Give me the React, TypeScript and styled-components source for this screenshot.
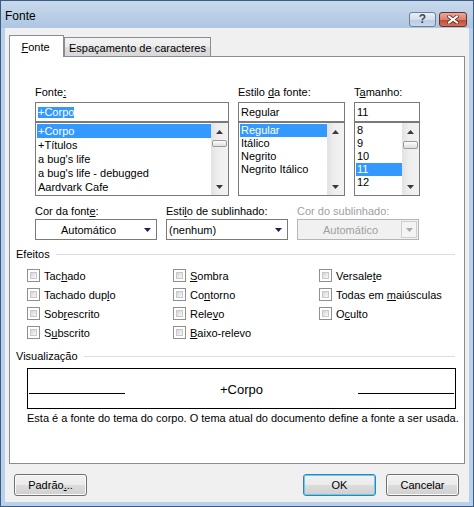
import React from "react";
import styled, { createGlobalStyle, css } from "styled-components";

const GlobalStyle = createGlobalStyle`
  html, body {
    margin: 0;
    padding: 0;
    background: #f0f0f0;
  }
  body {
    font-family: "Liberation Sans", Arial, sans-serif;
    font-size: 11px;
    color: #000;
  }
`;

const fontNames = ["+Corpo", "+Títulos", "a bug's life", "a bug's life - debugged", "Aardvark Cafe"];
const styles = ["Regular", "Itálico", "Negrito", "Negrito Itálico"];
const sizes = ["8", "9", "10", "11", "12"];

type Effect = { pre: string; key: string; post: string };
const effects: Effect[] = [
  { pre: "Tac", key: "h", post: "ado" },
  { pre: "Tachado dup", key: "l", post: "o" },
  { pre: "Sob", key: "r", post: "escrito" },
  { pre: "S", key: "u", post: "bscrito" },
  { pre: "", key: "S", post: "ombra" },
  { pre: "Co", key: "n", post: "torno" },
  { pre: "Rele", key: "v", post: "o" },
  { pre: "", key: "B", post: "aixo-relevo" },
  { pre: "Versale", key: "t", post: "e" },
  { pre: "Todas em ", key: "m", post: "aiúsculas" },
  { pre: "O", key: "c", post: "ulto" },
];

const Arrow = ({ up, color = "#3a3a3a" }: { up?: boolean; color?: string }) => (
  <svg width="7" height="4" viewBox="0 0 7 4">
    <polygon points={up ? "0,4 3.5,0 7,4" : "0,0 7,0 3.5,4"} fill={color} />
  </svg>
);

const ScrollBarView = ({ thumbTop = 0, thumbHeight = 7 }: { thumbTop?: number; thumbHeight?: number }) => (
  <ScrollBar>
    <ScrollButton>
      <Arrow up />
    </ScrollButton>
    <Thumb $h={thumbHeight} $top={thumbTop} />
    <ScrollSpacer />
    <ScrollButton>
      <Arrow />
    </ScrollButton>
  </ScrollBar>
);

const App: React.FC = () => {
  return (
    <>
      <GlobalStyle />
      <Window>
        <TitleBar>
          <Title>Fonte</Title>
          <CaptionButtons>
            <CaptionButton $kind="help">?</CaptionButton>
            <CaptionButton $kind="close">
              <svg width="12" height="9" viewBox="0 0 12 9">
                <path d="M2 1.5 L10 7.5 M10 1.5 L2 7.5" stroke="#6b2a22" strokeWidth="3.6" strokeLinecap="square" />
                <path d="M2 1.5 L10 7.5 M10 1.5 L2 7.5" stroke="#fff" strokeWidth="2" strokeLinecap="square" />
              </svg>
            </CaptionButton>
          </CaptionButtons>
        </TitleBar>

        <Client>
          <TabStrip>
            <Tab $active>
              <Key>F</Key>onte
            </Tab>
            <Tab>Espaçamento de caracteres</Tab>
          </TabStrip>

          <Panel>
            <ListsRow>
              <Column $w={194}>
                <FieldLabel>
                  Fonte<Key>:</Key>
                </FieldLabel>
                <TextBox>
                  <SelText>+Corpo</SelText>
                </TextBox>
                <ListBox>
                  <Items>
                    {fontNames.map((n, i) => (
                      <Item key={n} $h={14} $selected={i === 0}>
                        {n}
                      </Item>
                    ))}
                  </Items>
                  <ScrollBarView thumbHeight={7} />
                </ListBox>
              </Column>

              <Column $w={107}>
                <FieldLabel>
                  Estilo <Key>d</Key>a fonte:
                </FieldLabel>
                <TextBox>Regular</TextBox>
                <ListBox>
                  <Items>
                    {styles.map((n, i) => (
                      <Item key={n} $h={13} $selected={i === 0}>
                        {n}
                      </Item>
                    ))}
                  </Items>
                  <ScrollBarView thumbHeight={0} />
                </ListBox>
              </Column>

              <Column $w={66}>
                <FieldLabel>
                  T<Key>a</Key>manho:
                </FieldLabel>
                <TextBox>11</TextBox>
                <ListBox>
                  <Items>
                    {sizes.map((n) => (
                      <Item key={n} $h={13} $selected={n === "11"}>
                        {n}
                      </Item>
                    ))}
                  </Items>
                  <ScrollBarView thumbHeight={8} thumbTop={1} />
                </ListBox>
              </Column>
            </ListsRow>

            <ComboRow>
              <Column $w={122}>
                <FieldLabel $tight>
                  Cor da font<Key>e</Key>:
                </FieldLabel>
                <Combo>
                  <ComboText $center>Automático</ComboText>
                  <ComboArrow>
                    <Arrow color="#1b2350" />
                  </ComboArrow>
                </Combo>
              </Column>
              <Column $w={122}>
                <FieldLabel $tight>
                  Esti<Key>l</Key>o de sublinhado:
                </FieldLabel>
                <Combo>
                  <ComboText>(nenhum)</ComboText>
                  <ComboArrow>
                    <Arrow color="#1b2350" />
                  </ComboArrow>
                </Combo>
              </Column>
              <Column $w={122}>
                <FieldLabel $tight $disabled>
                  Cor do sublinhado:
                </FieldLabel>
                <Combo $disabled>
                  <ComboText $center>Automático</ComboText>
                  <ComboArrow $disabled>
                    <Arrow color="#a9a9a9" />
                  </ComboArrow>
                </Combo>
              </Column>
            </ComboRow>

            <GroupHeader>
              <span>Efeitos</span>
              <Rule />
            </GroupHeader>
            <CheckGrid>
              {effects.map((e) => (
                <CheckItem key={e.pre + e.key + e.post}>
                  <CheckBox />
                  <span>
                    {e.pre}
                    <Key>{e.key}</Key>
                    {e.post}
                  </span>
                </CheckItem>
              ))}
            </CheckGrid>

            <GroupHeader>
              <span>Visualização</span>
              <Rule />
            </GroupHeader>
            <PreviewArea>
              <PreviewBox>
                <PreviewLine />
                <PreviewText>+Corpo</PreviewText>
                <PreviewLine />
              </PreviewBox>
              <Description>
                Esta é a fonte do tema do corpo. O tema atual do documento define a fonte a ser usada.
              </Description>
            </PreviewArea>
          </Panel>

          <ButtonRow>
            <DialogButton>
              Padrão<Key>.</Key>..
            </DialogButton>
            <Push />
            <DialogButton $default>OK</DialogButton>
            <DialogButton>Cancelar</DialogButton>
          </ButtonRow>
        </Client>
      </Window>
    </>
  );
};

export default App;

const Window = styled.div`
  width: 474px;
  height: 507px;
  box-sizing: border-box;
  border: 1px solid #3b5c84;
  background: #b9d1ea;
  display: flex;
  flex-direction: column;
  padding: 0 4px 4px;
`;

const TitleBar = styled.div`
  height: 27px;
  margin: 0 -4px;
  padding: 0 6px 0 4px;
  background: linear-gradient(#c8d9ec, #adc6e1);
  display: flex;
  align-items: flex-start;
`;

const Title = styled.div`
  margin-top: 8px;
  font-size: 12px;
  line-height: 15px;
`;

const CaptionButtons = styled.div`
  margin-left: auto;
  margin-top: 11px;
  display: flex;
  gap: 3px;
`;

const CaptionButton = styled.div<{ $kind: "help" | "close" }>`
  box-sizing: border-box;
  height: 15px;
  border-radius: 3px;
  display: flex;
  align-items: center;
  justify-content: center;
  ${({ $kind }) =>
    $kind === "help"
      ? css`
          width: 27px;
          border: 1px solid #6e7f96;
          background: linear-gradient(#e9eff6 0%, #d3dfec 50%, #b9cce2 51%, #c9d8ea 100%);
          color: #3c4a5e;
          font-size: 12px;
          font-weight: bold;
          line-height: 13px;
        `
      : css`
          width: 28px;
          border: 1px solid #6b2e28;
          background: linear-gradient(#e9a99d 0%, #d9806f 50%, #c2472f 51%, #d2735a 100%);
        `}
`;

const Client = styled.div`
  flex: 1;
  background: #f0f0f0;
  padding: 7px 4px 0;
  display: flex;
  flex-direction: column;
`;

const TabStrip = styled.div`
  height: 22px;
  display: flex;
  align-items: flex-end;
  position: relative;
  z-index: 1;
  margin-bottom: -1px;
`;

const Tab = styled.div<{ $active?: boolean }>`
  box-sizing: border-box;
  border: 1px solid #898c95;
  display: flex;
  align-items: center;
  justify-content: center;
  ${({ $active }) =>
    $active
      ? css`
          width: 55px;
          height: 22px;
          border-bottom: none;
          background: #fff;
          padding-right: 2px;
        `
      : css`
          width: 147px;
          height: 20px;
          padding-top: 2px;
          background: linear-gradient(#f3f3f3 0%, #ebebeb 50%, #dddddd 51%, #d9d9d9 100%);
        `}
`;

const Key = styled.span`
  text-decoration: underline;
`;

const Panel = styled.div`
  height: 408px;
  box-sizing: border-box;
  border: 1px solid #898c95;
  background: #fff;
  padding: 29px 9px 0 6px;
  display: flex;
  flex-direction: column;
`;

const ListsRow = styled.div`
  display: flex;
  gap: 9px;
  padding-left: 19px;
`;

const Column = styled.div<{ $w: number }>`
  width: ${({ $w }) => $w}px;
  display: flex;
  flex-direction: column;
`;

const FieldLabel = styled.div<{ $tight?: boolean; $disabled?: boolean }>`
  height: 13px;
  line-height: 13px;
  margin-bottom: ${({ $tight }) => ($tight ? 1 : 3)}px;
  color: ${({ $disabled }) => ($disabled ? "#a0a0a0" : "#000")};
  white-space: nowrap;
`;

const TextBox = styled.div`
  height: 20px;
  box-sizing: border-box;
  border: 1px solid #7a7a7a;
  padding: 0 2px;
  display: flex;
  align-items: center;
  background: #fff;
`;

const SelText = styled.span`
  background: #3399ff;
  color: #fff;
  line-height: 11px;
`;

const ListBox = styled.div`
  height: 74px;
  box-sizing: border-box;
  border: 1px solid #7a7a7a;
  display: flex;
  background: #fff;
`;

const Items = styled.div`
  flex: 1;
  padding: 1px 0 0 1px;
  overflow: hidden;
`;

const Item = styled.div<{ $h: number; $selected?: boolean }>`
  height: ${({ $h }) => $h}px;
  line-height: ${({ $h }) => $h}px;
  padding-left: 1px;
  white-space: nowrap;
  background: ${({ $selected }) => ($selected ? "#3399ff" : "transparent")};
  color: ${({ $selected }) => ($selected ? "#fff" : "#000")};
`;

const ScrollBar = styled.div`
  width: 17px;
  background: linear-gradient(to right, #e2e2e2, #eeeeee 40%, #f2f2f2);
  display: flex;
  flex-direction: column;
`;

const ScrollButton = styled.div`
  height: 17px;
  display: flex;
  align-items: center;
  justify-content: center;
`;

const Thumb = styled.div<{ $h: number; $top: number }>`
  height: ${({ $h }) => $h}px;
  margin: ${({ $top }) => $top}px 1px 0;
  box-sizing: border-box;
  border: ${({ $h }) => ($h ? "1px solid #9a9a9a" : "none")};
  border-radius: 2px;
  background: linear-gradient(#fdfdfd, #dedede);
`;

const ScrollSpacer = styled.div`
  flex: 1;
`;

const ComboRow = styled.div`
  display: flex;
  gap: 9px;
  padding-left: 19px;
  margin-top: 9px;
`;

const Combo = styled.div<{ $disabled?: boolean }>`
  height: 21px;
  box-sizing: border-box;
  border: 1px solid ${({ $disabled }) => ($disabled ? "#b5b5b5" : "#7a7a7a")};
  background: ${({ $disabled }) => ($disabled ? "#f1f1f1" : "#fff")};
  color: ${({ $disabled }) => ($disabled ? "#a0a0a0" : "#000")};
  display: flex;
  align-items: center;
`;

const ComboText = styled.div<{ $center?: boolean }>`
  flex: 1;
  padding-left: 2px;
  text-align: ${({ $center }) => ($center ? "center" : "left")};
  white-space: nowrap;
`;

const ComboArrow = styled.div<{ $disabled?: boolean }>`
  box-sizing: border-box;
  width: 16px;
  height: 17px;
  margin-right: 1px;
  display: flex;
  align-items: center;
  justify-content: center;
  ${({ $disabled }) =>
    $disabled &&
    css`
      border: 1px solid #cfcfcf;
      background: #f4f4f4;
    `}
`;

const GroupHeader = styled.div`
  height: 13px;
  line-height: 13px;
  margin-top: 8px;
  display: flex;
  align-items: center;
  gap: 6px;
`;

const Rule = styled.div`
  flex: 1;
  height: 1px;
  background: #d5dfe5;
`;

const CheckGrid = styled.div`
  display: grid;
  grid-template-columns: repeat(3, 146px);
  grid-template-rows: repeat(4, 19px);
  grid-auto-flow: column;
  padding-left: 11px;
  margin-top: 5px;
`;

const CheckItem = styled.div`
  display: flex;
  align-items: center;
  gap: 4px;
  white-space: nowrap;
`;

const CheckBox = styled.div`
  width: 13px;
  height: 13px;
  box-sizing: border-box;
  border: 1px solid #8f8f8f;
  background: #fff;
  padding: 2px;
  &::after {
    content: "";
    display: block;
    width: 100%;
    height: 100%;
    box-sizing: border-box;
    border: 1px solid #c8c8c8;
    background: linear-gradient(135deg, #d6d6d6, #f7f7f7);
  }
`;

const PreviewArea = styled.div`
  padding-left: 11px;
  margin-top: 5px;
`;

const PreviewBox = styled.div`
  width: 429px;
  height: 41px;
  box-sizing: border-box;
  border: 1px solid #000;
  padding: 0 1px 14px;
  display: flex;
  align-items: flex-end;
`;

const PreviewLine = styled.div`
  width: 96px;
  height: 1px;
  background: #000;
`;

const PreviewText = styled.div`
  flex: 1;
  text-align: center;
  font-size: 13px;
  line-height: 16px;
  margin-bottom: -4px;
`;

const Description = styled.div`
  margin-top: 3px;
  line-height: 13px;
  white-space: nowrap;
`;

const ButtonRow = styled.div`
  margin-top: 10px;
  display: flex;
  gap: 10px;
  padding: 0 6px 0 5px;
`;

const Push = styled.div`
  flex: 1;
`;

const DialogButton = styled.div<{ $default?: boolean }>`
  width: 73px;
  height: 22px;
  box-sizing: border-box;
  border: 1px solid ${({ $default }) => ($default ? "#3c7fb1" : "#707070")};
  border-radius: 3px;
  background: linear-gradient(#f2f2f2 0%, #ebebeb 48%, #dddddd 50%, #cfcfcf 100%);
  box-shadow: ${({ $default }) => ($default ? "inset 0 0 0 1px #5ed0f3" : "inset 0 0 0 1px #fbfbfb")};
  display: flex;
  align-items: center;
  justify-content: center;
`;
